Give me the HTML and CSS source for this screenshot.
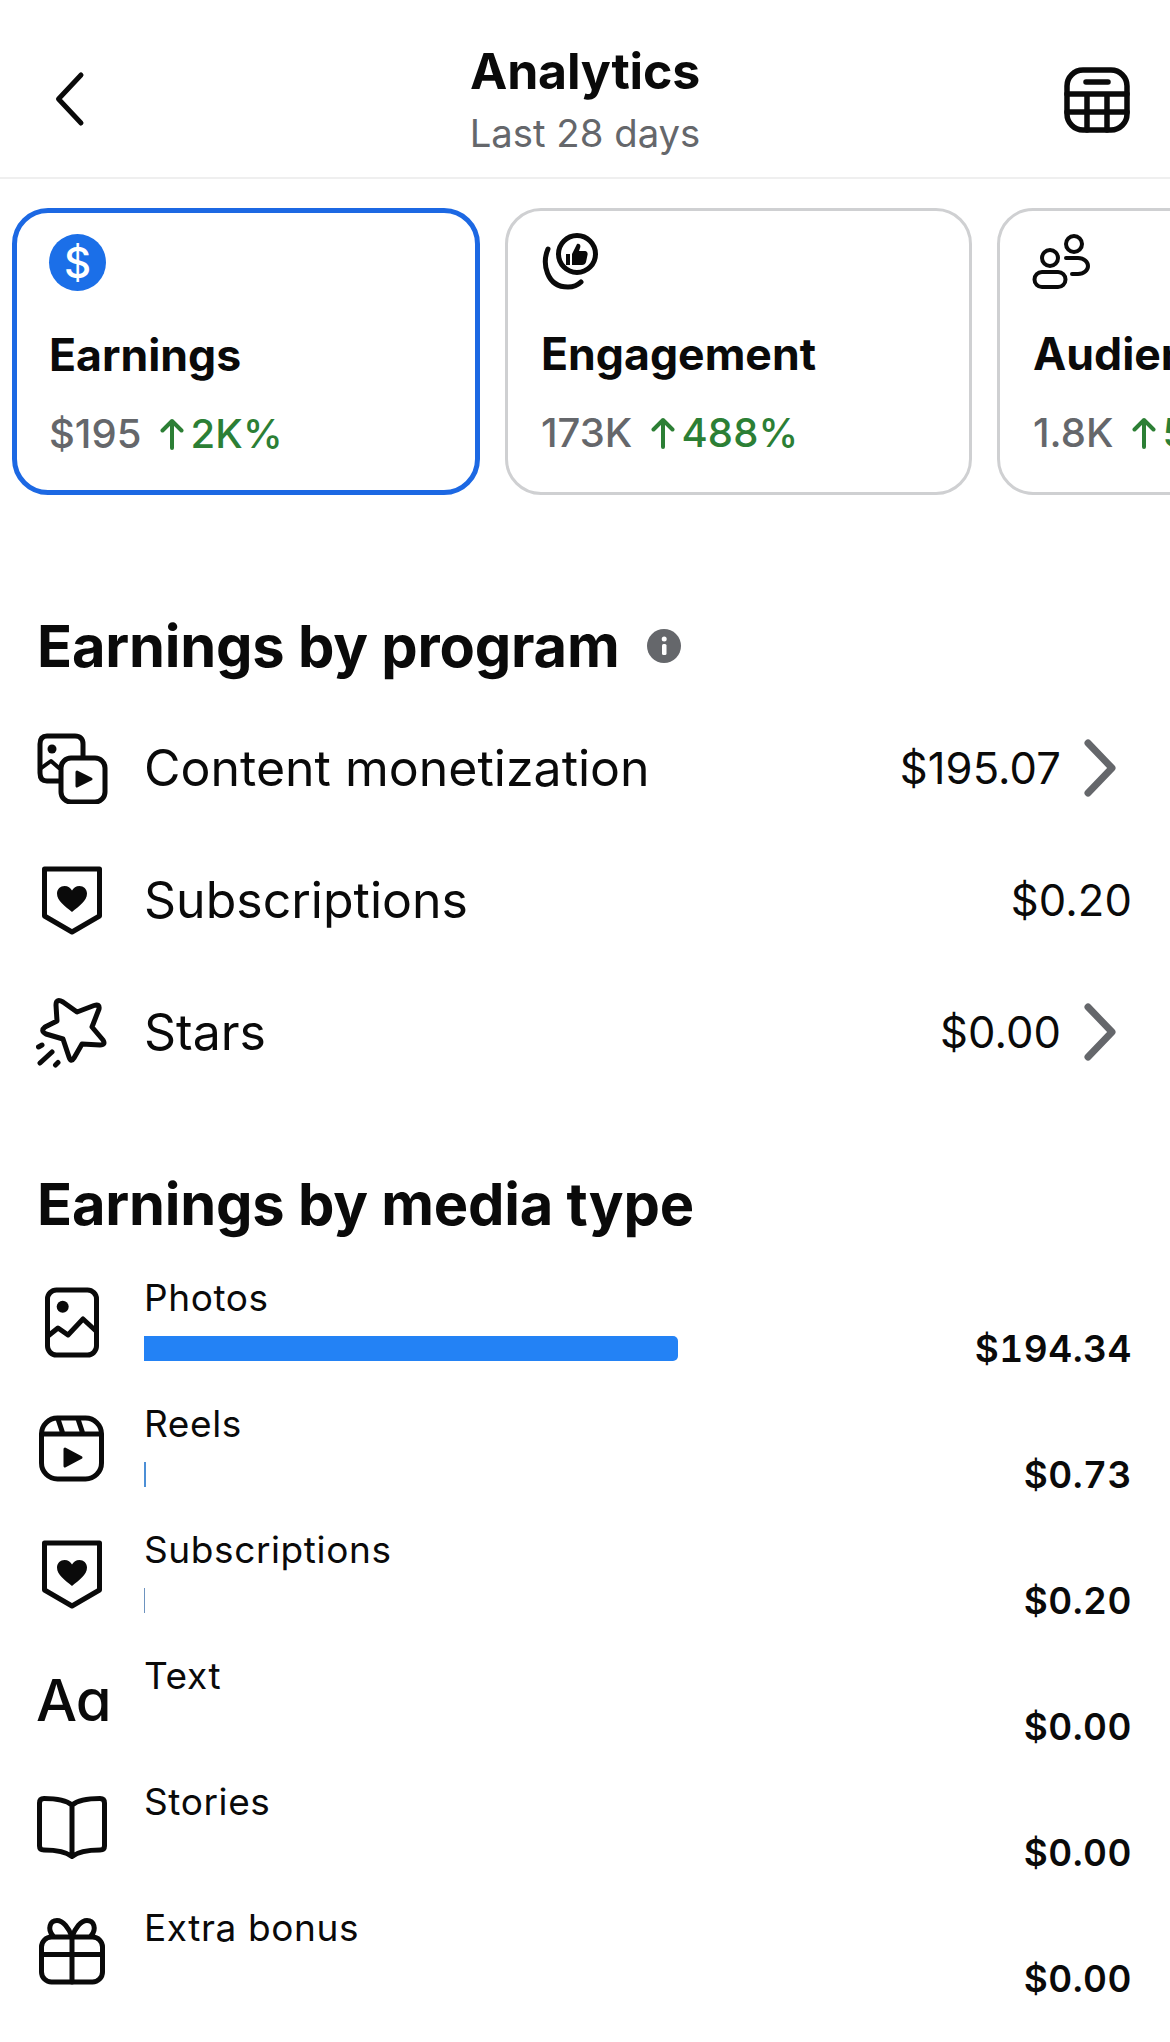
FILE: index.html
```html
<!DOCTYPE html>
<html lang="en">
<head>
<meta charset="utf-8">
<title>Analytics</title>
<link rel="stylesheet" href="styles.css">
</head>
<body>
<svg class="defs" width="0" height="0" aria-hidden="true">
  <symbol id="shield" viewBox="0 0 72 72">
    <path class="st" d="M8.500 5H63.500V52L36 68L8.500 52Z"/>
    <path class="fl" d="M36 48C29 42 21 37 21 29.500C21 25 24.500 22 28.500 22C32 22 34.500 24 36 26.500C37.500 24 40 22 43.500 22C47.500 22 51 25 51 29.500C51 37 43 42 36 48Z"/>
  </symbol>
</svg>

<header class="topbar">
  <svg class="back" viewBox="0 0 32 56"><path d="M27 4L4.500 28L27 52"/></svg>
  <div class="heading">
    <h1 class="title">Analytics</h1>
    <p class="subtitle">Last 28 days</p>
  </div>
  <svg class="table" viewBox="0 0 66 66">
    <rect class="st5" x="3" y="3" width="60" height="60" rx="16"/>
    <path class="st5" d="M22 15H44M3 27H63M3 45H63M23 27V63M43 27V63"/>
  </svg>
</header>

<div class="cards">
  <section class="card card-active">
    <div class="card-icon"><span class="dollar">$</span></div>
    <h2 class="card-title">Earnings</h2>
    <div class="card-stat"><span class="stat-value">$195</span>
      <svg class="up" viewBox="0 0 24 32"><path d="M12 30V3M2.500 12.500L12 3L21.500 12.500"/></svg><span class="stat-delta">2K%</span></div>
  </section>
  <section class="card">
    <div class="card-icon">
      <svg class="ic57" viewBox="0 0 60 57">
        <circle class="st" cx="37" cy="21" r="18.500"/>
        <path class="st" d="M8 16C2 30 6 54 28 54C33 54 37 53 41 49"/>
        <path class="fl" d="M26 21H30V32H26ZM32 21L37 11C40 10 41 13 40 15L39 18H45C47 18 48 20 47.500 22L46 29C45.500 31 44 32 42 32H32Z"/>
      </svg>
    </div>
    <h2 class="card-title">Engagement</h2>
    <div class="card-stat"><span class="stat-value">173K</span>
      <svg class="up" viewBox="0 0 24 32"><path d="M12 30V3M2.500 12.500L12 3L21.500 12.500"/></svg><span class="stat-delta">488%</span></div>
  </section>
  <section class="card">
    <div class="card-icon">
      <svg class="ic57" viewBox="0 0 60 57">
        <circle class="st3" cx="18" cy="25" r="8"/>
        <rect class="st3" x="2.500" y="39" width="31" height="15" rx="7.500"/>
        <circle class="st3" cx="42" cy="11" r="8"/>
        <path class="st3" d="M34 25H46C52 25 56 29 56 33C56 37 52 41 46 41H40"/>
      </svg>
    </div>
    <h2 class="card-title">Audience</h2>
    <div class="card-stat"><span class="stat-value">1.8K</span>
      <svg class="up" viewBox="0 0 24 32"><path d="M12 30V3M2.500 12.500L12 3L21.500 12.500"/></svg><span class="stat-delta">5%</span></div>
  </section>
</div>

<section class="section section-program">
  <h2 class="section-title">Earnings by program
    <svg class="info" viewBox="0 0 34 34"><circle cx="17" cy="17" r="17"/><rect x="15" y="15" width="4.500" height="11" rx="1.500"/><circle cx="17.200" cy="10" r="2.500"/></svg>
  </h2>
  <ul class="programs">
    <li class="program">
      <svg class="icon" viewBox="0 0 72 72">
        <path class="st" d="M23 49H11C6 49 4 46 4 41V12C4 7 6 4 11 4H39C44 4 47 7 47 12V24"/>
        <rect class="st" x="25" y="26" width="44" height="44" rx="10"/>
        <circle class="fl" cx="16" cy="17" r="4.500"/>
        <path class="st3" d="M4 37L15 29L23 36"/>
        <path class="fl rj" d="M41 40L55 47L41 54Z"/>
      </svg>
      <span class="program-name">Content monetization</span>
      <span class="program-value">$195.07</span>
      <svg class="chevron" viewBox="0 0 32 58"><path d="M4 4L28 29L4 54"/></svg>
    </li>
    <li class="program">
      <svg class="icon"><use href="#shield"/></svg>
      <span class="program-name">Subscriptions</span>
      <span class="program-value">$0.20</span>
    </li>
    <li class="program">
      <svg class="icon" viewBox="0 0 72 72">
        <path class="st" d="M27 6L41 16L58 9.500Q64 7.500 63 13L56 31L67 44Q70 49 64 49L46 48L38 62Q35 67 33 61L27 43L10 38Q4 35 9 31L21 25L20 9Q20 2 27 6Z"/>
        <path class="st" d="M2.500 51L6 49M4 67L16 56M19.500 69L22 66.500"/>
      </svg>
      <span class="program-name">Stars</span>
      <span class="program-value">$0.00</span>
      <svg class="chevron" viewBox="0 0 32 58"><path d="M4 4L28 29L4 54"/></svg>
    </li>
  </ul>
</section>

<section class="section section-media">
  <h2 class="section-title">Earnings by media type</h2>
  <ul class="media">
    <li class="media-row">
      <svg class="icon" viewBox="0 0 72 72">
        <rect class="st" x="11.500" y="4" width="49" height="65" rx="9"/>
        <circle class="fl" cx="26.700" cy="20.700" r="6"/>
        <path class="st" d="M12 50L22 42L32 49L47 33L60 45"/>
      </svg>
      <div class="media-main"><span class="media-name">Photos</span><div class="bar-track"><div class="bar bar-photos"></div></div></div>
      <span class="media-value">$194.34</span>
    </li>
    <li class="media-row">
      <svg class="icon" viewBox="0 0 72 72">
        <rect class="st" x="5.500" y="6" width="60" height="61" rx="16"/>
        <path class="st" d="M6 22H65M22 7L27 22M42 7L47 22"/>
        <path class="fl rj" d="M29 37L45 45.500L29 54Z"/>
      </svg>
      <div class="media-main"><span class="media-name">Reels</span><div class="bar-track"><div class="bar bar-reels"></div></div></div>
      <span class="media-value">$0.73</span>
    </li>
    <li class="media-row">
      <svg class="icon"><use href="#shield"/></svg>
      <div class="media-main"><span class="media-name">Subscriptions</span><div class="bar-track"><div class="bar bar-subs"></div></div></div>
      <span class="media-value">$0.20</span>
    </li>
    <li class="media-row">
      <span class="icon aa">Aa</span>
      <div class="media-main"><span class="media-name">Text</span><div class="bar-track"></div></div>
      <span class="media-value">$0.00</span>
    </li>
    <li class="media-row">
      <svg class="icon" viewBox="0 0 72 72">
        <path class="st" d="M36 15C30 10 22 8.500 8 8.500Q3.500 8.500 3.500 13V56Q3.500 60 8 60C20 60 29 61 36 66.500C43 61 52 60 64 60Q68.500 60 68.500 56V13Q68.500 8.500 64 8.500C50 8.500 42 10 36 15ZM36 15V66"/>
      </svg>
      <div class="media-main"><span class="media-name">Stories</span><div class="bar-track"></div></div>
      <span class="media-value">$0.00</span>
    </li>
    <li class="media-row">
      <svg class="icon" viewBox="0 0 72 72">
        <rect class="st" x="5.500" y="21" width="61" height="45" rx="10"/>
        <path class="st" d="M5.500 38.500H66.500M36 21V66"/>
        <path class="st" d="M36 21C33 12 27 4.500 21 4.500C14 4.500 11 13 17 20M36 21C39 12 45 4.500 51 4.500C58 4.500 61 13 55 20"/>
      </svg>
      <div class="media-main"><span class="media-name">Extra bonus</span></div>
      <span class="media-value">$0.00</span>
    </li>
  </ul>
</section>
</body>
</html>
```

FILE: styles.css
```css
* { box-sizing: border-box; }
html, body { margin: 0; padding: 0; }
body {
  width: 1170px;
  height: 2042px;
  overflow: hidden;
  background: #fff;
  color: #0a0a0a;
  font-family: Inter, "Liberation Sans", sans-serif;
}
h1, h2, p, ul { margin: 0; padding: 0; }
ul { list-style: none; }
.defs { display: block; height: 0; }

.st, .st3, .st5 { fill: none; stroke: #0a0a0a; stroke-linecap: round; stroke-linejoin: round; stroke-width: 5; }
.st3 { stroke-width: 4; }
.st5 { stroke-width: 5.5; }
.fl { fill: #0a0a0a; }
.rj { stroke: #0a0a0a; stroke-width: 3; stroke-linejoin: round; }

.topbar {
  height: 179px;
  border-bottom: 2px solid #efefef;
  display: flex;
  align-items: flex-start;
  justify-content: space-between;
  padding: 0 40px 0 54px;
}
.back { width: 32px; height: 56px; margin-top: 71px; fill: none; stroke: #0a0a0a; stroke-width: 5; stroke-linecap: round; stroke-linejoin: round; }
.heading { text-align: center; padding-top: 44px; margin-left: 20px; }
.title { font-size: 50px; font-weight: 700; line-height: 54px; letter-spacing: -0.2px; white-space: nowrap; }
.subtitle { font-size: 38.3px; font-weight: 400; line-height: 40px; color: #65676b; margin-top: 15px; white-space: nowrap; }
.table { width: 66px; height: 66px; margin-top: 67px; }

.cards {
  display: flex;
  gap: 25px;
  padding: 29px 0 0 12px;
  width: 1600px;
}
.card {
  width: 467px;
  height: 287px;
  flex: none;
  border: 3px solid #cfd0d2;
  border-radius: 36px;
  padding: 22px 0 0 33px;
}
.card-active { border: 5px solid #1c68e3; padding: 21px 0 0 32px; width: 468px; }
.card-icon { height: 57px; display: flex; align-items: center; }
.ic57 { width: 60px; height: 57px; margin-left: -1px; }
.dollar {
  width: 57px;
  height: 57px;
  border-radius: 50%;
  background: #1b6fe8;
  color: #fff;
  font-size: 42px;
  font-weight: 500;
  display: flex;
  align-items: center;
  justify-content: center;
}
.card-title { font-size: 44.6px; font-weight: 700; line-height: 44px; margin-top: 42px; white-space: nowrap; }
.card-stat { display: flex; align-items: center; margin-top: 35px; font-size: 40px; line-height: 44px; white-space: nowrap; font-weight: 500; }
.stat-value { color: #65676b; }
.up { width: 24px; height: 32px; margin-left: 19px; margin-right: 6px; fill: none; stroke: #2c7f35; stroke-width: 4; stroke-linecap: round; stroke-linejoin: round; }
.stat-delta { color: #2c7f35; letter-spacing: 0.2px; }

.section { padding: 0 38px 0 37px; }
.section-program { margin-top: 121px; }
.section-media { margin-top: 76px; }
.section-title { font-size: 57.8px; font-weight: 700; line-height: 60px; letter-spacing: -0.2px; display: flex; align-items: center; white-space: nowrap; }
.info { width: 34px; height: 34px; margin-left: 28px; fill: #65676b; }
.info rect, .info circle + rect + circle { fill: #fff; }

.programs { margin-top: 26px; }
.program { height: 132px; display: flex; align-items: center; }
.icon { width: 72px; height: 72px; flex: none; margin-left: -1px; }
.program-name { font-size: 50px; font-weight: 400; margin-left: 36px; flex: 1; }
.program-value { font-size: 43.5px; font-weight: 400; letter-spacing: 0.1px; }
.chevron { width: 32px; height: 58px; margin: 0 16px 0 23px; fill: none; stroke: #65676b; stroke-width: 7; stroke-linecap: round; stroke-linejoin: round; }

.media { margin-top: 41px; }
.media-row { height: 126.1px; display: flex; align-items: flex-start; }
.media-row .icon { margin-top: 11px; }
.aa { font-family: Inter, sans-serif; font-size: 58px; font-weight: 500; line-height: 72px; font-feature-settings: "cv11"; letter-spacing: -1px; white-space: nowrap; }
.media-main { flex: 1; margin-left: 36px; }
.media-name { display: block; font-size: 37px; line-height: 46px; letter-spacing: 0.6px; }
.bar-track { height: 25px; margin-top: 15px; }
.bar { height: 25px; background: #2382f5; border-radius: 0 5px 5px 0; }
.bar-photos { width: 534px; }
.bar-reels { width: 2px; background: #4c8fd6; border-radius: 0; }
.bar-subs { width: 1px; background: #6d93bf; border-radius: 0; }
.media-value { font-size: 37px; font-weight: 600; line-height: 46px; margin-top: 51px; letter-spacing: 0.5px; white-space: nowrap; font-variant-numeric: tabular-nums; }
```
